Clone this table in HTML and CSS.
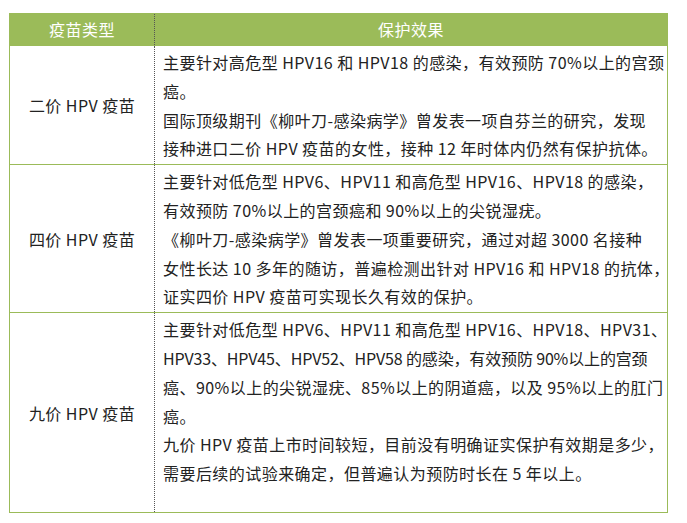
FILE: index.html
```html
<!DOCTYPE html>
<html lang="zh-CN">
<head>
<meta charset="utf-8">
<link rel="stylesheet" href="styles.css">
</head>
<body>
<div class="wrap">
<table class="hpv">
  <thead>
    <tr>
      <th class="c1">疫苗类型</th>
      <th class="c2">保护效果</th>
    </tr>
  </thead>
  <tbody>
    <tr class="r1">
      <td class="name">二价 HPV 疫苗</td>
      <td class="desc">
        <p>主要针对高危型 HPV16 和 HPV18 的感染，有效预防 70%以上的宫颈<br>癌。</p>
        <p>国际顶级期刊《柳叶刀-感染病学》曾发表一项自芬兰的研究，发现<br>接种进口二价 HPV 疫苗的女性，接种 12 年时体内仍然有保护抗体。</p>
      </td>
    </tr>
    <tr class="r2">
      <td class="name">四价 HPV 疫苗</td>
      <td class="desc">
        <p>主要针对低危型 HPV6、HPV11 和高危型 HPV16、HPV18 的感染，<br>有效预防 70%以上的宫颈癌和 90%以上的尖锐湿疣。</p>
        <p>《柳叶刀-感染病学》曾发表一项重要研究，通过对超 3000 名接种<br>女性长达 10 多年的随访，普遍检测出针对 HPV16 和 HPV18 的抗体，<br>证实四价 HPV 疫苗可实现长久有效的保护。</p>
      </td>
    </tr>
    <tr class="r3">
      <td class="name">九价 HPV 疫苗</td>
      <td class="desc">
        <p>主要针对低危型 HPV6、HPV11 和高危型 HPV16、HPV18、HPV31、<br><span class="tight">HPV33、HPV45、HPV52、HPV58 的感染，有效预防 90%以上的宫颈</span><br>癌、90%以上的尖锐湿疣、85%以上的阴道癌，以及 95%以上的肛门<br>癌。</p>
        <p>九价 HPV 疫苗上市时间较短，目前没有明确证实保护有效期是多少，<br>需要后续的试验来确定，但普遍认为预防时长在 5 年以上。</p>
        <p class="empty">&nbsp;</p>
      </td>
    </tr>
  </tbody>
</table>
</div>
</body>
</html>
```

FILE: styles.css
```css
html, body {
  margin: 0;
  padding: 0;
  background: #ffffff;
}

.wrap {
  padding: 13px 0 0 9px;
}

.hpv {
  border-collapse: collapse;
  width: 659px;
  table-layout: fixed;
  font-family: "Noto Sans CJK SC", "Noto Sans", sans-serif;
  font-size: 16px;
  letter-spacing: 0.45px;
  color: #222222;
  border: 1px solid #9bbb59;
}

.hpv th {
  background: #9bbb59;
  color: #ffffff;
  font-weight: normal;
  height: 31px;
  padding: 0;
  text-align: center;
  line-height: 31px;
}

.hpv .c1 {
  width: 144px;
  border-right: 1px dotted #555555;
}

.hpv td {
  border-top: 1px solid #9bbb59;
  vertical-align: middle;
  padding: 0;
}

.hpv td.name {
  text-align: center;
  border-right: 1px dotted #555555;
}

.hpv td.desc {
  padding: 2px 6px 1px 8px;
  line-height: 28.8px;
  white-space: nowrap;
}

.hpv p {
  margin: 0;
}

.hpv .tight {
  letter-spacing: -0.15px;
}

.hpv p.empty {
  line-height: 23px;
}
```
